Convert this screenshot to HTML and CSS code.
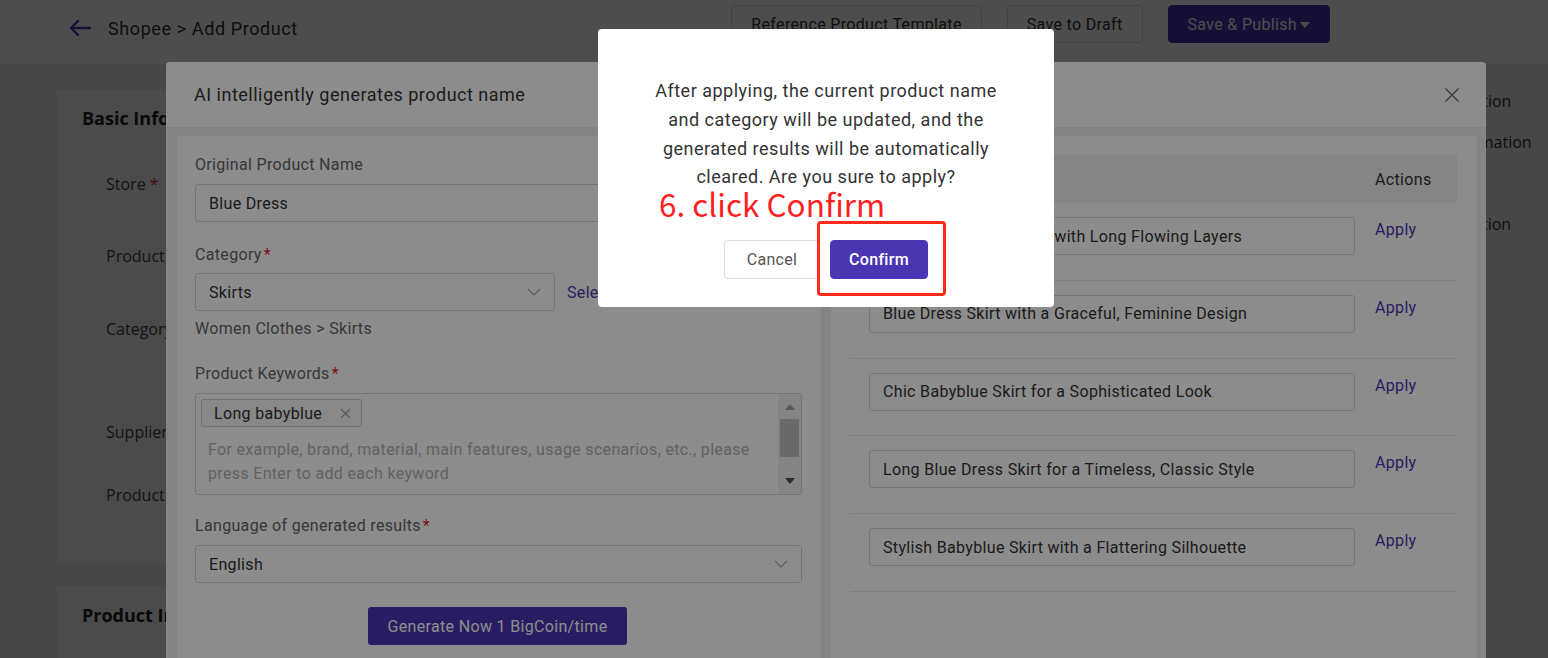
FILE: index.html
```html
<!DOCTYPE html>
<html lang="en">
<head>
<meta charset="utf-8">
<title>Shopee &gt; Add Product</title>
<link rel="stylesheet" href="styles.css">
</head>
<body>
<div class="page">
  <header class="topbar">
    <div class="crumb">
      <svg class="back" viewBox="0 0 24 24" width="24" height="24"><path d="M22 12H3M10 5l-7 7 7 7" stroke="#4a36b2" stroke-width="2.4" fill="none" stroke-linecap="round" stroke-linejoin="round"/></svg>
      <span>Shopee &gt; Add Product</span>
    </div>
    <div class="top-actions">
      <button class="btn">Reference Product Template</button>
      <button class="btn">Save to Draft</button>
      <button class="btn primary">Save &amp; Publish<span class="caret"></span></button>
    </div>
  </header>
  <main class="content">
    <div class="cards">
      <section class="card basic">
        <h2 class="card-title">Basic Information</h2>
        <div class="form-row r1"><span class="flabel">Store <i class="req">*</i></span></div>
        <div class="form-row r2"><span class="flabel">Product Name</span></div>
        <div class="form-row r3"><span class="flabel">Category</span></div>
        <div class="form-row r4"><span class="flabel">Supplier</span></div>
        <div class="form-row r5"><span class="flabel">Product SKU</span></div>
      </section>
      <section class="card second">
        <h2 class="card-title">Product Information</h2>
      </section>
    </div>
    <nav class="anchors">
      <a>Basic Information</a>
      <a>Product Information</a>
      <a>Variation</a>
      <a>Sales Information</a>
    </nav>
  </main>
</div>

<div class="mask"></div>

<div class="modal">
  <div class="modal-head">
    <span class="modal-title">AI intelligently generates product name</span>
    <svg class="close" viewBox="0 0 16 16" width="16" height="16"><path d="M1.5 1.5l13 13M14.5 1.5l-13 13" stroke="#666" stroke-width="1.3"/></svg>
  </div>
  <div class="modal-body">
    <div class="panel left">
      <div class="label">Original Product Name</div>
      <div class="field full">Blue Dress</div>

      <div class="label gap">Category<i class="req">*</i></div>
      <div class="select-line">
        <div class="field select cat">Skirts
          <svg class="chev" viewBox="0 0 14 8" width="14" height="8"><path d="M1 1l6 6 6-6" stroke="#aaa" stroke-width="1.1" fill="none"/></svg>
        </div>
        <a class="link">Select Category</a>
      </div>
      <div class="path">Women Clothes &gt; Skirts</div>

      <div class="label gap3">Product Keywords<i class="req">*</i></div>
      <div class="kw-box">
        <span class="tag">Long babyblue
          <svg viewBox="0 0 10 10" width="11" height="11"><path d="M1 1l8 8M9 1L1 9" stroke="#999" stroke-width="1.1"/></svg>
        </span>
        <div class="placeholder">For example, brand, material, main features, usage scenarios, etc., please press Enter to add each keyword</div>
        <div class="scrollbar">
          <span class="sb-up"></span>
          <span class="sb-thumb"></span>
          <span class="sb-down"></span>
        </div>
      </div>

      <div class="label gap2">Language of generated results<i class="req">*</i></div>
      <div class="field select full">English
        <svg class="chev" viewBox="0 0 14 8" width="14" height="8"><path d="M1 1l6 6 6-6" stroke="#aaa" stroke-width="1.1" fill="none"/></svg>
      </div>

      <div class="gen-wrap"><button class="gen-btn">Generate Now 1 BigCoin/time</button></div>
    </div>

    <div class="panel right">
      <div class="thead">
        <div class="c1">Generated Results</div>
        <div class="c2">Actions</div>
      </div>
      <div class="trow"><div class="c1"><div class="field">Babyblue Pleated Skirt with Long Flowing Layers</div></div><div class="c2"><a class="apply">Apply</a></div></div>
      <div class="trow"><div class="c1"><div class="field">Blue Dress Skirt with a Graceful, Feminine Design</div></div><div class="c2"><a class="apply">Apply</a></div></div>
      <div class="trow"><div class="c1"><div class="field">Chic Babyblue Skirt for a Sophisticated Look</div></div><div class="c2"><a class="apply">Apply</a></div></div>
      <div class="trow"><div class="c1"><div class="field">Long Blue Dress Skirt for a Timeless, Classic Style</div></div><div class="c2"><a class="apply">Apply</a></div></div>
      <div class="trow"><div class="c1"><div class="field">Stylish Babyblue Skirt with a Flattering Silhouette</div></div><div class="c2"><a class="apply">Apply</a></div></div>
    </div>
  </div>
</div>

<div class="mask"></div>

<div class="confirm">
  <p>After applying, the current product name and category will be updated, and the generated results will be automatically cleared. Are you sure to apply?</p>
  <div class="confirm-btns">
    <button class="c-cancel">Cancel</button>
    <button class="c-ok">Confirm</button>
  </div>
</div>

<div class="note">6. click Confirm</div>
<div class="note-box"></div>
</body>
</html>
```

FILE: styles.css
```css
* { box-sizing: border-box; }
html, body { margin: 0; height: 100%; }
body {
  font-family: Roboto, "Liberation Sans", sans-serif;
  background: #ebebeb;
  color: #333;
  overflow: hidden;
  letter-spacing: 0.33px;
}
button { font-family: inherit; letter-spacing: inherit; cursor: pointer; }
a { cursor: pointer; }

/* ---------- page ---------- */
.topbar {
  height: 64px;
  background: #fff;
  display: flex;
  align-items: flex-start;
  padding: 5px 218px 0 68px;
}
.crumb {
  height: 46px;
  display: flex;
  align-items: center;
  gap: 16px;
  font-size: 18px;
  letter-spacing: 0.6px;
  color: #333;
}
.top-actions {
  margin-left: auto;
  display: flex;
  gap: 25px;
}
.btn {
  height: 38px;
  padding: 0 19px;
  border: 1px solid #d9d9d9;
  border-radius: 4px;
  background: #fff;
  font-size: 16px;
  color: #333;
  display: inline-flex;
  align-items: center;
}
.btn.primary {
  background: #4a36b2;
  border-color: #4a36b2;
  color: #fff;
}
.caret {
  margin-left: 3px;
  margin-top: 2px;
  border-left: 5px solid transparent;
  border-right: 5px solid transparent;
  border-top: 6px solid #fff;
}

.content {
  display: flex;
  padding-left: 57px;
}
.cards { width: 1303px; padding-top: 26px; }
.card {
  background: #f8f8f8;
  font-family: "Open Sans", sans-serif;
  letter-spacing: 0;
}
.card.basic { height: 473px; padding: 16px 0 0 25px; }
.card.second { margin-top: 23px; height: 200px; padding: 17px 0 0 25px; }
.card-title {
  margin: 0;
  font-size: 18px;
  line-height: 24px;
  font-weight: 700;
  color: #222;
}
.form-row { padding-left: 24px; font-size: 16px; line-height: 22px; color: #444; }
.form-row.r1 { margin-top: 43px; height: 72px; }
.form-row.r2 { height: 73px; }
.form-row.r3 { height: 103px; }
.form-row.r4 { height: 63px; }
.req { font-style: normal; color: #e0262b; }

.anchors {
  margin-left: 20px;
  padding-top: 17px;
  display: flex;
  flex-direction: column;
  font-family: "Open Sans", sans-serif;
  letter-spacing: 0;
  font-size: 16px;
  line-height: 41px;
  color: #333;
}

/* ---------- masks ---------- */
.mask {
  position: fixed;
  inset: 0;
  background: rgba(0, 0, 0, 0.45);
}

/* ---------- AI modal ---------- */
.modal {
  position: fixed;
  left: 166px;
  top: 62px;
  width: 1320px;
  height: 720px;
  background: #fff;
  border-radius: 4px;
  display: flex;
  flex-direction: column;
}
.modal-head {
  height: 65px;
  flex: none;
  display: flex;
  align-items: center;
  justify-content: space-between;
  padding: 0 26px 0 28px;
  font-size: 18px;
  letter-spacing: 0.5px;
  color: #333;
}
.modal-body {
  flex: 1;
  background: #f0f0f0;
  padding: 9px 9px 0 11px;
  display: grid;
  grid-template-columns: 644px 646px;
  gap: 10px;
}
.panel { background: #fff; }
.panel.left { padding: 19px 19px 0 18px; }
.panel.right { padding: 19px 20px 0 19px; }

.label { font-size: 16px; line-height: 20px; color: #666; }
.label.gap { margin-top: 23px; }
.label.gap3 { margin-top: 25px; }
.label.gap2 { margin-top: 21px; }
.label .req { margin-left: 2px; }

.field {
  height: 38px;
  border: 1px solid #d6d6d6;
  border-radius: 3px;
  display: flex;
  align-items: center;
  padding: 0 13px;
  font-size: 16px;
  color: #333;
  background: #fff;
  white-space: nowrap;
  overflow: hidden;
}
.label + .field, .label + .select-line, .label + .kw-box { margin-top: 9px; }
.field.select { justify-content: space-between; }
.field.cat { width: 360px; margin-top: -1px; }
.select-line { display: flex; align-items: center; gap: 12px; }
.link { color: #4a36b2; font-size: 16px; }
.path { margin-top: 8px; font-size: 16px; line-height: 20px; color: #666; }

.kw-box {
  position: relative;
  height: 102px;
  border: 1px solid #d6d6d6;
  border-radius: 3px;
  padding: 5px 30px 0 5px;
}
.tag {
  display: inline-flex;
  align-items: center;
  gap: 18px;
  height: 28px;
  padding: 0 10px 0 12px;
  border: 1px solid #cfcfcf;
  border-radius: 2px;
  background: #f7f7f7;
  font-size: 16px;
  color: #333;
}
.placeholder {
  margin-top: 11px;
  padding-left: 7px;
  font-size: 16px;
  line-height: 24px;
  color: #b3b3b3;
}
.scrollbar {
  position: absolute;
  top: 0;
  right: 0;
  bottom: 0;
  width: 23px;
  background: #f1f1f1;
}
.sb-up, .sb-down {
  position: absolute;
  left: 7px;
  border-left: 5px solid transparent;
  border-right: 5px solid transparent;
}
.sb-up { top: 10px; border-bottom: 6px solid #a3a3a3; }
.sb-down { top: 84px; border-top: 6px solid #505050; }
.sb-thumb {
  position: absolute;
  left: 2px;
  right: 2px;
  top: 25px;
  height: 38px;
  background: #c1c1c1;
}

.gen-wrap { margin-top: 24px; display: flex; justify-content: center; padding-right: 2px; }
.gen-btn {
  height: 38px;
  width: 259px;
  border: none;
  border-radius: 3px;
  background: #4a36b2;
  color: #fff;
  font-size: 16px;
}

.thead {
  height: 48px;
  background: #f2f2f2;
  display: flex;
  align-items: center;
  font-size: 16px;
  color: #333;
}
.c1 { width: 525px; padding-left: 19px; flex: none; }
.c2 { flex: 1; }
.trow {
  display: flex;
  align-items: flex-start;
  padding: 14px 0 24.75px;
  border-bottom: 1px solid #e8e8e8;
}
.trow .field { width: 486px; }
.apply {
  display: block;
  padding-top: 3px;
  font-size: 16px;
  line-height: 20px;
  color: #4a36b2;
}

/* ---------- confirm dialog ---------- */
.confirm {
  position: fixed;
  left: 598px;
  top: 29px;
  width: 456px;
  height: 278px;
  background: #fff;
  border-radius: 4px;
  padding-top: 48px;
  text-align: center;
}
.confirm p {
  margin: 0 auto;
  width: 360px;
  font-size: 18px;
  letter-spacing: 0.5px;
  line-height: 28.75px;
  color: #333;
}
.confirm-btns {
  margin-top: 48px;
  display: flex;
  justify-content: center;
  gap: 10px;
}
.c-cancel, .c-ok {
  height: 39px;
  border-radius: 4px;
  font-size: 16px;
}
.c-cancel {
  width: 96px;
  background: #fff;
  border: 1px solid #dcdcdc;
  color: #555;
}
.c-ok {
  width: 98px;
  background: #4a36b2;
  border: 1px solid #4a36b2;
  color: #fff;
  font-weight: 500;
}

/* ---------- annotation ---------- */
.note {
  position: fixed;
  left: 659px;
  top: 182px;
  font-family: "Noto Sans CJK SC", "Noto Sans", sans-serif;
  font-size: 31.5px;
  letter-spacing: 0;
  line-height: 42px;
  color: #ff1f1f;
  white-space: nowrap;
}
.note-box {
  position: fixed;
  left: 817px;
  top: 221px;
  width: 129px;
  height: 75px;
  border: 3px solid #ff2a1a;
  border-radius: 4px;
}
```
